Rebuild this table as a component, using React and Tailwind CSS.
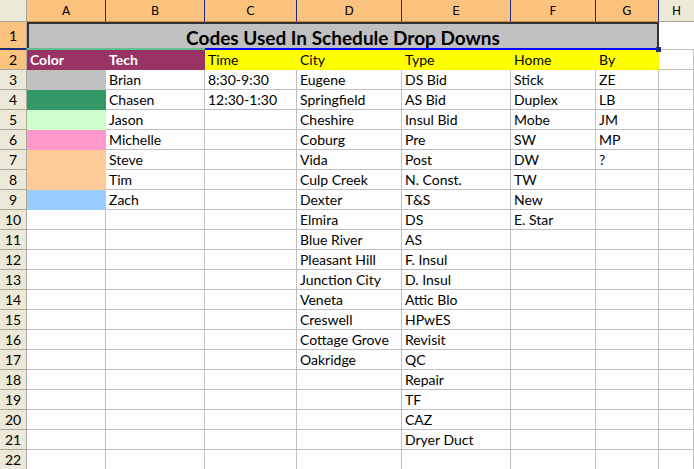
const cols = ["A", "B", "C", "D", "E", "F", "G", "H"];

const fills = {
  3: "bg-[#c0c0c0] border-[#c0c0c0]",
  4: "bg-[#339966] border-[#339966]",
  5: "bg-[#ccffcc] border-[#ccffcc]",
  6: "bg-[#ff99cc] border-[#ff99cc]",
  7: "bg-[#ffcc99] border-[#ffcc99]",
  8: "bg-[#ffcc99] border-[#ffcc99]",
  9: "bg-[#99ccff] border-[#99ccff]",
};

const rows = [
  ["Brian", "8:30-9:30", "Eugene", "DS Bid", "Stick", "ZE"],
  ["Chasen", "12:30-1:30", "Springfield", "AS Bid", "Duplex", "LB"],
  ["Jason", "", "Cheshire", "Insul Bid", "Mobe", "JM"],
  ["Michelle", "", "Coburg", "Pre", "SW", "MP"],
  ["Steve", "", "Vida", "Post", "DW", "?"],
  ["Tim", "", "Culp Creek", "N. Const.", "TW", ""],
  ["Zach", "", "Dexter", "T&S", "New", ""],
  ["", "", "Elmira", "DS", "E. Star", ""],
  ["", "", "Blue River", "AS", "", ""],
  ["", "", "Pleasant Hill", "F. Insul", "", ""],
  ["", "", "Junction City", "D. Insul", "", ""],
  ["", "", "Veneta", "Attic Blo", "", ""],
  ["", "", "Creswell", "HPwES", "", ""],
  ["", "", "Cottage Grove", "Revisit", "", ""],
  ["", "", "Oakridge", "QC", "", ""],
  ["", "", "", "Repair", "", ""],
  ["", "", "", "TF", "", ""],
  ["", "", "", "CAZ", "", ""],
  ["", "", "", "Dryer Duct", "", ""],
  ["", "", "", "", "", ""],
];

const cell = "h-[20px] border-r border-b border-[#c0c0c0] px-[3px] leading-[20px] whitespace-nowrap overflow-hidden";

export default function App() {
  return (
    <div className="w-[694px] h-[469px] overflow-hidden bg-white font-['Lato',sans-serif] text-[14px] text-black">
      <div className="grid grid-cols-[27px_79px_99px_92px_105px_109px_85px_63px_35px]">
        {/* column headers */}
        <div className="h-[22px] bg-[#ece9d8] border-r border-b border-[#aca899]" />
        {cols.map((c) => (
          <div
            key={c}
            className={
              "h-[22px] flex items-center justify-center font-['DejaVu_Sans',sans-serif] text-[12px] border-b " +
              (c === "H"
                ? "bg-[#ece9d8] border-[#aca899]"
                : "bg-[#fcc37e] border-r border-r-[#1c2a7a] border-b-[#c58a45]")
            }
          >
            {c}
          </div>
        ))}

        {/* row 1 */}
        <div className="h-[28px] bg-[#fcc37e] border-r border-[#aca899] border-b-2 border-b-[#1c2a7a] flex items-center justify-center text-[14px]">
          1
        </div>
        <div className="col-span-7 h-[28px] bg-[#c0c0c0] border-2 border-[#333] border-b-0 flex items-center justify-center font-bold text-[19px] leading-none">
          Codes Used In Schedule Drop Downs
        </div>
        <div className="h-[28px] border-b border-[#c0c0c0]" />

        {/* selection line */}
        <div className="col-span-9 h-0 relative">
          <div className="absolute left-[27px] top-[-2px] w-[178px] h-[2px] bg-[#5fbf8f]" />
          <div className="absolute left-[205px] top-[-2px] w-[453px] h-[2px] bg-[#0000ff]" />
          <div className="absolute left-[656px] top-[-3px] w-[5px] h-[5px] bg-[#1c2a7a]" />
        </div>

        {/* row 2 */}
        <div className="h-[20px] bg-[#fcc37e] border-r border-b border-[#aca899] flex items-center justify-center text-[14px]">
          2
        </div>
        <div className="h-[20px] bg-[#993366] px-[3px] leading-[20px] text-white font-bold">Color</div>
        <div className="h-[20px] bg-[#993366] px-[3px] leading-[20px] text-white font-bold">Tech</div>
        {["Time", "City", "Type", "Home", "By"].map((t) => (
          <div key={t} className="h-[20px] bg-[#ffff00] px-[3px] leading-[20px]">
            {t}
          </div>
        ))}
        <div className={cell} />

        {rows.map((r, i) => {
          const n = i + 3;
          return [
            <div
              key={"h" + n}
              className="h-[20px] bg-[#ece9d8] border-r border-b border-[#aca899] flex items-center justify-center text-[14px]"
            >
              {n}
            </div>,
            <div key={"a" + n} className={"h-[20px] border-r border-b " + (fills[n] || "border-[#c0c0c0]")} />,
            ...r.map((v, j) => (
              <div key={n + "-" + j} className={cell}>
                {v}
              </div>
            )),
            <div key={"x" + n} className={cell} />,
          ];
        })}
      </div>
    </div>
  );
}
